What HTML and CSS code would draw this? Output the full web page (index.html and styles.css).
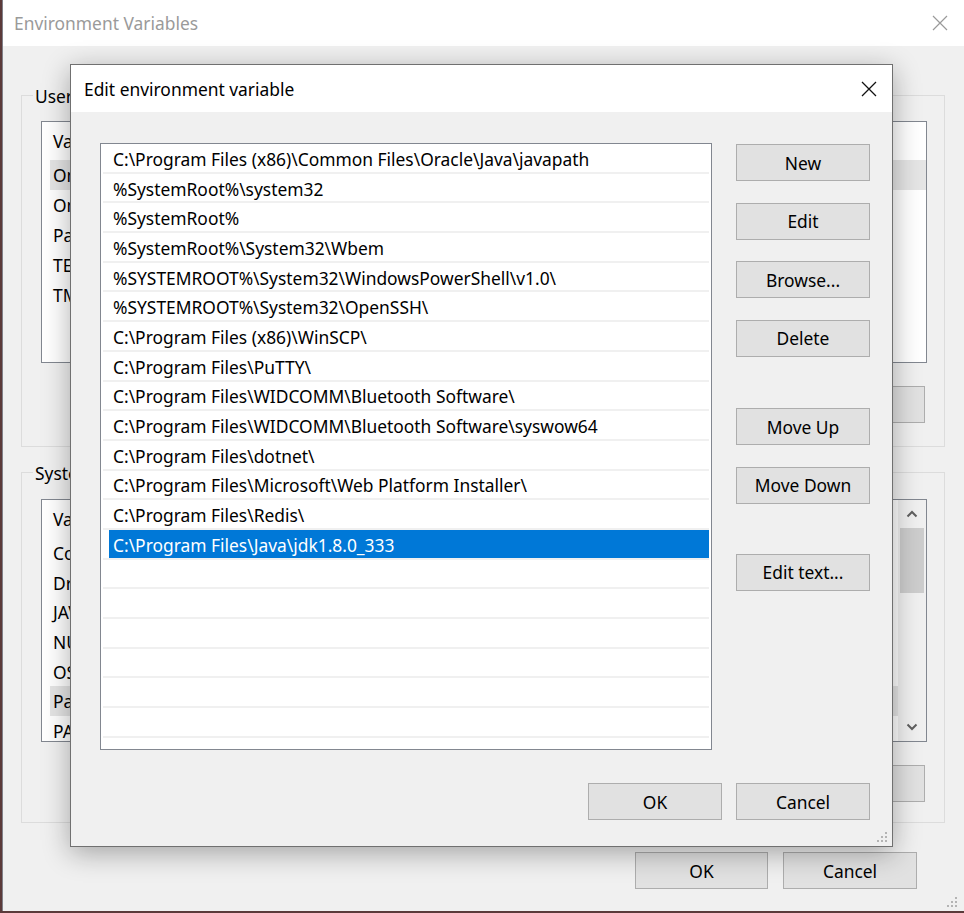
FILE: index.html
```html
<!DOCTYPE html>
<html lang="en">
<head>
  <meta charset="UTF-8"/>
  <meta name="viewport" content="width=device-width, initial-scale=1.0"/>
  <title>Edit environment variable</title>
  <link rel="stylesheet" href="styles.css">
</head>
<body>
  <div class="desktop">
    <div class="window">
      <div class="titlebar">
        <span class="title">Environment Variables</span>
        <svg class="close" viewBox="0 0 16 16"><path d="M1 1L15 15M15 1L1 15" stroke="#9a9a9a" stroke-width="1.2" fill="none"/></svg>
      </div>

      <div class="group user-group">
        <div class="group-label">User variables</div>
        <div class="listview">
          <div class="lv-main">
            <div class="lv-head">Variable</div>
            <div class="lv-row picked">OneDrive</div>
            <div class="lv-row">OneDriveConsumer</div>
            <div class="lv-row">Path</div>
            <div class="lv-row">TEMP</div>
            <div class="lv-row">TMP</div>
          </div>
        </div>
        <div class="group-buttons">
          <button>New...</button>
          <button>Edit...</button>
          <button>Delete</button>
        </div>
      </div>

      <div class="group system-group">
        <div class="group-label">System variables</div>
        <div class="listview">
          <div class="lv-main">
            <div class="lv-head">Variable</div>
            <div class="lv-row">ComSpec</div>
            <div class="lv-row">DriverData</div>
            <div class="lv-row">JAVA_HOME</div>
            <div class="lv-row">NUMBER_OF_PROCESSORS</div>
            <div class="lv-row">OS</div>
            <div class="lv-row picked">Path</div>
            <div class="lv-row">PATHEXT</div>
          </div>
          <div class="scrollbar">
            <div class="sb-arrow"><svg viewBox="0 0 12 8"><path d="M1.5 6.5L6 2L10.5 6.5" stroke="#606060" stroke-width="2" fill="none"/></svg></div>
            <div class="sb-thumb"></div>
            <div class="sb-track"></div>
            <div class="sb-arrow"><svg viewBox="0 0 12 8"><path d="M1.5 1.5L6 6L10.5 1.5" stroke="#606060" stroke-width="2" fill="none"/></svg></div>
          </div>
        </div>
        <div class="group-buttons">
          <button>New...</button>
          <button>Edit...</button>
          <button>Delete</button>
        </div>
      </div>

      <div class="window-footer">
        <button>OK</button>
        <button>Cancel</button>
      </div>
    </div>
    <svg class="grip window-grip" viewBox="0 0 12 12"><g fill="#b4b4b4"><rect x="9" y="1" width="2" height="2"/><rect x="5" y="5" width="2" height="2"/><rect x="9" y="5" width="2" height="2"/><rect x="1" y="9" width="2" height="2"/><rect x="5" y="9" width="2" height="2"/><rect x="9" y="9" width="2" height="2"/></g></svg>

    <div class="dialog">
      <div class="dialog-title">
        <span>Edit environment variable</span>
        <svg class="close" viewBox="0 0 16 16"><path d="M1 1L15 15M15 1L1 15" stroke="#111" stroke-width="1.3" fill="none"/></svg>
      </div>
      <div class="dialog-body">
        <div class="dialog-main">
          <div class="path-list">
            <div class="path-row"><span class="path-text">C:\Program Files (x86)\Common Files\Oracle\Java\javapath</span></div>
            <div class="path-row"><span class="path-text">%SystemRoot%\system32</span></div>
            <div class="path-row"><span class="path-text">%SystemRoot%</span></div>
            <div class="path-row"><span class="path-text">%SystemRoot%\System32\Wbem</span></div>
            <div class="path-row"><span class="path-text">%SYSTEMROOT%\System32\WindowsPowerShell\v1.0\</span></div>
            <div class="path-row"><span class="path-text">%SYSTEMROOT%\System32\OpenSSH\</span></div>
            <div class="path-row"><span class="path-text">C:\Program Files (x86)\WinSCP\</span></div>
            <div class="path-row"><span class="path-text">C:\Program Files\PuTTY\</span></div>
            <div class="path-row"><span class="path-text">C:\Program Files\WIDCOMM\Bluetooth Software\</span></div>
            <div class="path-row"><span class="path-text">C:\Program Files\WIDCOMM\Bluetooth Software\syswow64</span></div>
            <div class="path-row"><span class="path-text">C:\Program Files\dotnet\</span></div>
            <div class="path-row"><span class="path-text">C:\Program Files\Microsoft\Web Platform Installer\</span></div>
            <div class="path-row"><span class="path-text">C:\Program Files\Redis\</span></div>
            <div class="path-row selected"><span class="path-text">C:\Program Files\Java\jdk1.8.0_333</span></div>
            <div class="path-row"><span class="path-text"></span></div>
            <div class="path-row"><span class="path-text"></span></div>
            <div class="path-row"><span class="path-text"></span></div>
            <div class="path-row"><span class="path-text"></span></div>
            <div class="path-row"><span class="path-text"></span></div>
            <div class="path-row"><span class="path-text"></span></div>
          </div>
          <div class="side-buttons">
            <button>New</button>
            <button>Edit</button>
            <button>Browse...</button>
            <button>Delete</button>
            <button class="spaced">Move Up</button>
            <button>Move Down</button>
            <button class="spaced-more">Edit text...</button>
          </div>
        </div>
        <div class="dialog-footer">
          <button>OK</button>
          <button>Cancel</button>
        </div>
      </div>
      <svg class="grip" viewBox="0 0 12 12"><g fill="#b4b4b4"><rect x="9" y="1" width="2" height="2"/><rect x="5" y="5" width="2" height="2"/><rect x="9" y="5" width="2" height="2"/><rect x="1" y="9" width="2" height="2"/><rect x="5" y="9" width="2" height="2"/><rect x="9" y="9" width="2" height="2"/></g></svg>
    </div>
  </div>
</body>
</html>
```

FILE: styles.css
```css
* { box-sizing: border-box; }
body { margin: 0; background: #5b3a3a; font-family: "Noto Sans", sans-serif; font-size: 17.4px; color: #000; overflow: hidden; }
button { font: inherit; color: #000; width: 134px; height: 37px; padding: 0; background: #e1e1e1; border: 1px solid #adadad; }

.desktop { position: relative; width: 964px; height: 913px; padding-left: 2px; overflow: hidden; }
.window { height: 911px; background: #f0f0f0; border-left: 1px solid #808088; }
.titlebar { height: 46px; background: #fff; display: flex; align-items: center; justify-content: space-between; padding: 0 16px 0 11px; }
.titlebar .title { color: #9a9a9a; }
.close { width: 16px; height: 16px; }

.group { width: 924px; margin-left: 18px; border: 1px solid #dcdcdc; }
.user-group { margin-top: 49px; padding-bottom: 23px; }
.system-group { margin-top: 25px; padding-bottom: 20px; }
.group-label { width: fit-content; margin: -12px 0 0 11px; padding: 0 2px; line-height: 24px; background: #f0f0f0; }
.listview { display: flex; height: 242px; margin: 13px 17px 0 19px; background: #fff; border: 1px solid #828790; overflow: hidden; }
.system-group .listview { height: 243px; margin-top: 14px; }
.lv-main { flex: 1; overflow: hidden; white-space: nowrap; }
.lv-head { height: 38px; display: flex; align-items: center; padding-left: 11px; }
.lv-row { height: 30px; margin-left: 8px; padding-left: 3px; display: flex; align-items: center; }
.system-group .lv-row { height: 29.7px; }
.lv-row.picked { background: #e5e5e5; }
.group-buttons { display: flex; justify-content: flex-end; gap: 14px; margin: 23px 19px 0 0; }

.scrollbar { width: 28px; background: #f0f0f0; display: flex; flex-direction: column; align-items: center; }
.sb-arrow { height: 28px; width: 100%; display: flex; align-items: center; justify-content: center; }
.sb-arrow svg { width: 12px; height: 8px; }
.sb-thumb { width: 24px; height: 65px; background: #cdcdcd; }
.sb-track { flex: 1; }

.window-footer { display: flex; justify-content: flex-end; gap: 15px; margin-top: 29px; padding-right: 47px; }
.window-footer button:first-child { width: 133px; }
.grip { position: absolute; right: 4px; bottom: 3px; width: 12px; height: 12px; }
.window-grip { right: 6px; bottom: 5px; }

.dialog { position: absolute; left: 70px; top: 64px; width: 823px; height: 783px; display: flex; flex-direction: column; background: #f0f0f0; border: 1px solid #707070; box-shadow: 0 6px 26px rgba(0,0,0,0.32); }
.dialog-title { height: 47px; flex-shrink: 0; background: #fff; display: flex; align-items: center; justify-content: space-between; padding: 0 15px 0 13px; }
.dialog-body { flex: 1; padding: 31px 22px 0 29px; }
.dialog-main { display: flex; gap: 24px; }
.path-list { width: 612px; height: 607px; background: #fff; border: 1px solid #828790; overflow: hidden; white-space: nowrap; }
.path-row { height: 29.7px; margin: 0 2px; border-bottom: 2px solid #f0f0f0; display: flex; }
.path-text { flex: 1; margin-left: 6px; padding: 2px 0 0 4px; display: flex; align-items: center; }
.path-row.selected .path-text { background: #0078d7; color: #fff; }
.side-buttons { display: flex; flex-direction: column; gap: 21.5px; margin-top: 1px; }
.side-buttons .spaced { margin-top: 30px; }
.side-buttons .spaced-more { margin-top: 28.5px; }
.dialog-footer { display: flex; justify-content: flex-end; gap: 14px; margin-top: 33px; }
```
